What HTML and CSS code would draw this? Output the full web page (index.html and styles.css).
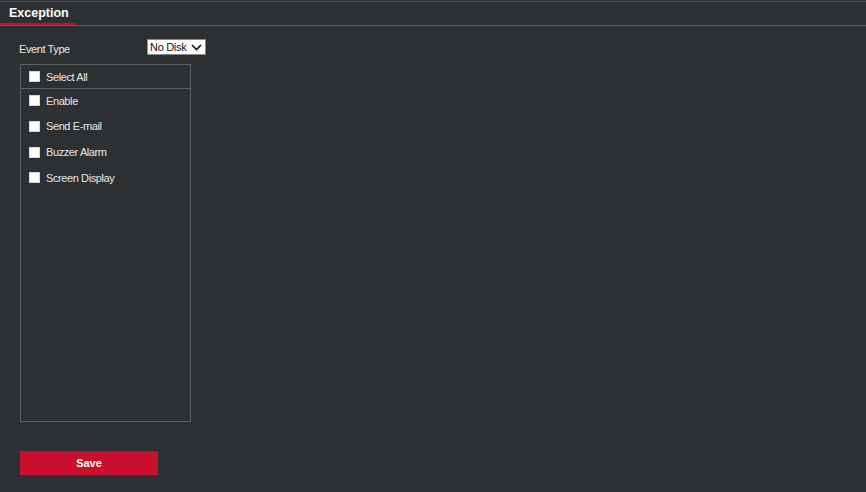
FILE: index.html
```html
<!DOCTYPE html>
<html>
<head>
<meta charset="utf-8">
<link rel="stylesheet" href="styles.css">
</head>
<body>
<div class="page">
  <div class="tabs">
    <div class="tab">Exception</div>
  </div>
  <div class="content">
    <div class="event-row">
      <span class="label">Event Type</span>
      <div class="select">
        <span>No Disk</span>
        <svg class="chev" width="11" height="7" viewBox="0 0 11 7"><path d="M1 1 L5.5 5.5 L10 1" fill="none" stroke="#111" stroke-width="1.6"/></svg>
      </div>
    </div>
    <div class="box">
      <div class="row head"><span class="cb"></span><span>Select All</span></div>
      <div class="list">
        <div class="row"><span class="cb"></span><span>Enable</span></div>
        <div class="row"><span class="cb"></span><span>Send E-mail</span></div>
        <div class="row"><span class="cb"></span><span>Buzzer Alarm</span></div>
        <div class="row"><span class="cb"></span><span>Screen Display</span></div>
      </div>
    </div>
    <button class="save">Save</button>
  </div>
</div>
</body>
</html>
```
FILE: styles.css
```css
html, body {
  margin: 0;
  padding: 0;
  background: #2d3033;
  height: 100%;
}
body {
  font-family: "Liberation Sans", Arial, sans-serif;
  color: #e6e6e6;
}
.page {
  margin-top: 1px;
  border-top: 1px solid #4d5053;
}
.tabs {
  display: flex;
  height: 23px;
  border-bottom: 1px solid #5c5f63;
}
.tab {
  padding: 0 9px;
  font-size: 12.5px;
  font-weight: bold;
  color: #ffffff;
  line-height: 22px;
  height: 23px;
  box-sizing: border-box;
  border-bottom: 2px solid #c8102e;
  margin-bottom: -2px;
  width: 75px;
}
.content {
  padding-left: 19px;
}
.event-row {
  display: flex;
  align-items: center;
  margin-top: 13px;
  height: 16px;
}
.label {
  width: 128px;
  font-size: 11px;
  letter-spacing: -0.4px;
  padding-top: 3px;
}
.select {
  width: 59px;
  height: 16px;
  box-sizing: border-box;
  background: #ffffff;
  border: 1px solid #8a8a8a;
  display: flex;
  align-items: center;
  justify-content: space-between;
  padding: 0 2px 0 2px;
  color: #111;
  font-size: 11px;
  letter-spacing: -0.3px;
}
.chev {
  margin-right: 1px;
}
.box {
  margin-top: 9px;
  margin-left: 1px;
  width: 171px;
  height: 358px;
  box-sizing: border-box;
  border: 1px solid #5c5f62;
}
.row {
  display: flex;
  align-items: center;
  height: 25.67px;
  padding-left: 8px;
  font-size: 11px;
  letter-spacing: -0.4px;
  color: #e6e6e6;
}
.row.head {
  height: 23px;
  border-bottom: 1px solid #5c5f62;
}
.list {
  margin-top: -1px;
}
.cb {
  width: 9px;
  height: 9px;
  background: #ffffff;
  border: 1px solid #d6d6d6;
  margin-right: 6px;
  flex: none;
}
.save {
  display: block;
  margin-top: 29px;
  margin-left: 1px;
  width: 138px;
  height: 24px;
  border: none;
  background: #c8102e;
  color: #ffffff;
  font-family: "Liberation Sans", Arial, sans-serif;
  font-size: 11px;
  font-weight: bold;
  padding: 0;
}
```
